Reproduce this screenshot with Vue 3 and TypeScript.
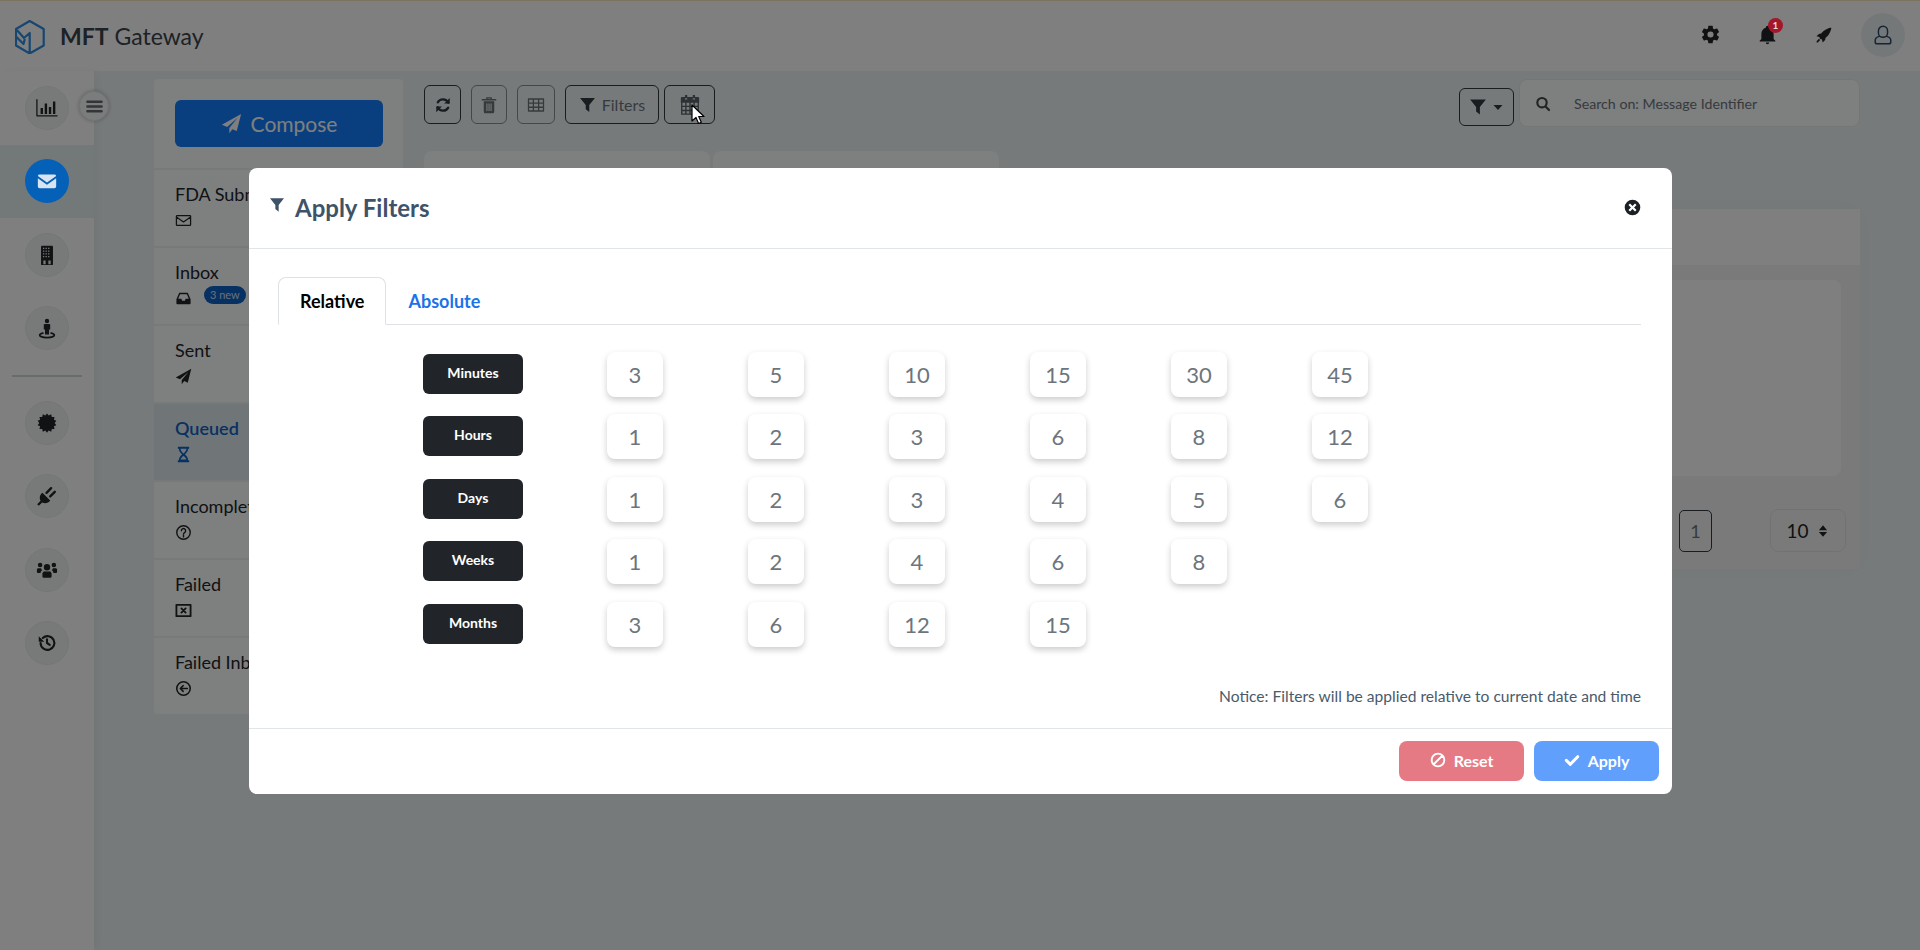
<script setup lang="ts">
import { h } from 'vue'
import type { FunctionalComponent } from 'vue'

interface IconDef {
  f?: string
  s?: string
  w?: number
}

// burst outline for the certificate icon
function burst(points: number, outer: number, inner: number): string {
  let d = ''
  for (let i = 0; i < points * 2; i++) {
    const r = i % 2 ? inner : outer
    const a = (Math.PI * i) / points
    d += `${i ? 'L' : 'M'}${(12 + r * Math.sin(a)).toFixed(2)} ${(12 - r * Math.cos(a)).toFixed(2)}`
  }
  return d + 'z'
}

// window holes of the building icon
function windows(): string {
  let d = ''
  for (let y = 4; y < 16; y += 3) {
    for (let x = 7.6; x < 16; x += 2.8) d += `M${x} ${y}h1.4v1.4H${x}z`
  }
  return d + 'M8 18h2.500v4H8zM13.500 18H16v4h-2.500z'
}

const icons: Record<string, IconDef> = {
  chart: { s: 'M1 3V20.500h22', f: 'M5 12h2.600v6.500H5zM9.500 7h2.600v11.500H9.500zM14 11h2.600v7.500H14zM18.500 5h2.600v13.500h-2.600z', w: 1.4 },
  mail: { f: 'M2 6.500A2 2 0 0 1 4 5h16a2 2 0 0 1 2 1.500l-10 7zM2 9v9a2 2 0 0 0 2 2h16a2 2 0 0 0 2-2V9l-10 7z' },
  envelope: { s: 'M3 5h18a1 1 0 0 1 1 1v12a1 1 0 0 1-1 1H3a1 1 0 0 1-1-1V6a1 1 0 0 1 1-1zM2.500 7.500L12 14l9.500-6.500', w: 1.8 },
  building: { f: 'M6.500 2h11a1 1 0 0 1 1 1v19a1 1 0 0 1-1 1h-11a1 1 0 0 1-1-1V3a1 1 0 0 1 1-1z' + windows() },
  street: {
    f: 'M12 2a2.400 2.400 0 1 0 0 4.800A2.400 2.400 0 0 0 12 2zM9.500 7.500h5a1 1 0 0 1 1 1v5h-1.300V19H9.800v-5.500H8.500v-5a1 1 0 0 1 1-1z',
    s: 'M7.500 17.500c-2 .5-3.500 1.300-3.500 2.200C4 21.200 7.500 22.500 12 22.500s8-1.300 8-2.800c0-.9-1.500-1.700-3.500-2.200',
    w: 1.900,
  },
  certificate: { f: burst(14, 10.500, 8.400) },
  plug: {
    f: 'M7 8.500l8.500 8.500c-2 3-6 3.600-8.800 2L3 22.700 1.300 21 5 17.300c-1.600-2.800-1-6.800 2-8.800z',
    s: 'M11.500 8.500l5-5M15.500 12.500l5-5',
    w: 2.600,
  },
  users: {
    f: 'M12 5.500a3.500 3.500 0 1 1 0 7 3.500 3.500 0 0 1 0-7zM4.500 4a2.500 2.500 0 1 1 0 5 2.500 2.500 0 0 1 0-5zM19.500 4a2.500 2.500 0 1 1 0 5 2.500 2.500 0 0 1 0-5zM7 15.500a3 3 0 0 1 3-2h4a3 3 0 0 1 3 2V19c0 1-.8 1.500-2 1.500H9c-1.200 0-2-.5-2-1.500zM1 11.500c0-1 1-1.500 2-1.500h2.500c.3 1 .8 1.700 1.500 2.300-1.500.7-2 1.700-2 3H2.500c-1 0-1.500-.8-1.500-1.800zM23 11.500c0-1-1-1.500-2-1.500h-2.500c-.3 1-.8 1.700-1.500 2.300 1.500.7 2 1.700 2 3h2.500c1 0 1.500-.8 1.500-1.800z',
  },
  history: { f: 'M3 4.500V10.500H9z', s: 'M5 12a7.500 7.500 0 1 0 2.400-5.500M12 8v4l3 2', w: 2.300 },
  send: { f: 'M23 1L1 13.500l6 2.500L19 5.500 9.500 17v6l3.500-4.500 5 2.200z' },
  inbox: { f: 'M6 4h12l4 9v6a1 1 0 0 1-1 1H3a1 1 0 0 1-1-1v-6zM7.200 6l-2.700 6.500H9l1 2.500h4l1-2.500h4.500L16.800 6z' },
  hourglass: {
    f: 'M4 1h16v3h-1.500c0 4-2.500 6-4.500 8 2 2 4.500 4 4.500 8H20v3H4v-3h1.500c0-4 2.500-6 4.500-8-2-2-4.500-4-4.500-8H4zM7.800 4c.2 3 2.700 5.500 4.200 6.500 1.500-1 4-3.500 4.200-6.500zM12 14c-1.500 1-3.400 2.600-4 5h8c-.6-2.400-2.500-4-4-5z',
  },
  question: { s: 'M12 2.500a9.500 9.500 0 1 0 0 19 9.500 9.500 0 0 0 0-19zM9 9.500a3 3 0 1 1 4.500 2.600c-1 .6-1.500 1.100-1.500 2.400M12 16v2.200', w: 2 },
  windowClose: { s: 'M2 4h20v16H2zM9 9l6 6M15 9l-6 6', w: 2.600 },
  arrowLeft: { s: 'M12 2.500a9.500 9.500 0 1 0 0 19 9.500 9.500 0 0 0 0-19zM17.500 12H8M11.500 8L7.500 12l4 4', w: 2.200 },
  refresh: {
    f: 'M21 2.500V10h-7.500zM3 21.500V14h7.500z',
    s: 'M19 9A7.800 7.800 0 0 0 5 8.500M5 15a7.800 7.800 0 0 0 14 .5',
    w: 3,
  },
  trash: {
    f: 'M5 7h14v14a2 2 0 0 1-2 2H7a2 2 0 0 1-2-2zM8.500 10v10H10V10zM11.300 10v10h1.500V10zM14 10v10h1.500V10z',
    s: 'M3 5h18M9 5V2.500h6V5',
    w: 1.800,
  },
  table: { s: 'M2 4h20v16H2zM2 9.500h20M2 15h20M8.500 4v16M15.500 4v16', w: 1.700 },
  filter: { f: 'M1.500 2h21l-8 10v10l-5-4V12z' },
  calendar: {
    f: 'M2 4h20v5.500H2zM6.500 1H9v5H6.500zM15 1h2.500v5H15z',
    s: 'M3 4h18v18H3zM3 13.500h18M3 18h18M7.500 9v13M12 9v13M16.500 9v13',
    w: 1.500,
  },
  gear: {
    f: 'M12 15.500A3.500 3.500 0 1 1 12 8.500a3.500 3.500 0 0 1 0 7zM19.430 12.970c.04-.32.07-.64.07-.97s-.03-.66-.07-1l2.110-1.630c.19-.15.24-.42.12-.64l-2-3.460c-.12-.22-.39-.31-.61-.22l-2.490 1c-.52-.39-1.060-.73-1.690-.98l-.37-2.650A.5.5 0 0 0 14 2h-4a.5.5 0 0 0-.5.42l-.37 2.650c-.63.25-1.170.59-1.690.98l-2.490-1c-.22-.09-.49 0-.61.22l-2 3.460c-.13.22-.07.49.12.64L4.570 11c-.04.34-.07.67-.07 1s.03.65.07.97l-2.110 1.660c-.19.15-.25.42-.12.64l2 3.460c.12.22.39.3.61.21l2.490-1c.52.4 1.060.74 1.690.99l.37 2.650c.04.24.25.42.5.42h4c.25 0 .46-.18.5-.42l.37-2.650c.63-.26 1.170-.59 1.690-.99l2.490 1c.22.09.49.01.61-.21l2-3.460c.12-.22.07-.49-.12-.64z',
  },
  bell: { f: 'M21 19v1H3v-1l2-2v-6c0-3.100 2.030-5.830 5-6.710V4a2 2 0 1 1 4 0v.29c2.970.88 5 3.610 5 6.710v6zM14 21a2 2 0 1 1-4 0z' },
  rocket: {
    f: 'M2.810 14.120l2.830-2.830 2.530-.5C11.390 6.410 17.550 4.220 19.780 4.220c0 2.230-2.190 8.390-6.570 11.610l-.5 2.530-2.830 2.830-.71-3.530c-1.410 0-1.410 0-2.120-.71s-.71-.71-.71-2.120zM5.640 16.950l1.410 1.410-2.660 2.670H2.970v-1.420z',
  },
  user: {
    s: 'M12 2.500a5 5 0 0 0-5 5v2a5 5 0 0 0 10 0v-2a5 5 0 0 0-5-5zM8 13.500c-2.500.5-4.500 2-4.500 4.500v1.500a2 2 0 0 0 2 2h13a2 2 0 0 0 2-2V18c0-2.500-2-4-4.500-4.500',
    w: 1.600,
  },
  search: { s: 'M10.500 3a7 7 0 1 0 0 14 7 7 0 0 0 0-14zM15.500 15.500L21 21', w: 3.200 },
  bars: { s: 'M3 6h18M3 12h18M3 18h18', w: 3 },
  ban: { s: 'M12 2.500a9.500 9.500 0 1 0 0 19 9.500 9.500 0 0 0 0-19zM6 18L18 6', w: 2.800 },
  check: { s: 'M3.500 12.500l6 6L20.500 7', w: 4.500 },
  closeCircle: {
    f: 'M12 1a11 11 0 1 0 0 22 11 11 0 0 0 0-22zM8.500 6.300L12 9.800l3.500-3.500 2.200 2.200-3.500 3.500 3.500 3.500-2.200 2.200-3.500-3.500-3.500 3.500-2.200-2.200 3.500-3.500-3.500-3.500z',
  },
  caret: { f: 'M3 8h18l-9 10z' },
  sort: { f: 'M12 2l7 8.500H5zM12 22l-7-8.500h14z' },
}

const Ico: FunctionalComponent<{ n: string }> = (props) => {
  const def = icons[props.n]
  return h('svg', { viewBox: '0 0 24 24', class: 'ico' }, [
    def.f ? h('path', { d: def.f, fill: 'currentColor', 'fill-rule': 'evenodd' }) : null,
    def.s
      ? h('path', {
          d: def.s,
          fill: 'none',
          stroke: 'currentColor',
          'stroke-width': def.w ?? 2,
          'stroke-linecap': 'round',
          'stroke-linejoin': 'round',
        })
      : null,
  ])
}
Ico.props = ['n']

const railTop = ['chart', 'mail', 'building', 'street']
const railBottom = ['certificate', 'plug', 'users', 'history']

const folders = [
  { name: 'FDA Submissions', icon: 'envelope' },
  { name: 'Inbox', icon: 'inbox', badge: '3 new' },
  { name: 'Sent', icon: 'send' },
  { name: 'Queued', icon: 'hourglass', active: true },
  { name: 'Incomplete', icon: 'question' },
  { name: 'Failed', icon: 'windowClose' },
  { name: 'Failed Inbound', icon: 'arrowLeft' },
]

const ranges = [
  { label: 'Minutes', values: [3, 5, 10, 15, 30, 45] },
  { label: 'Hours', values: [1, 2, 3, 6, 8, 12] },
  { label: 'Days', values: [1, 2, 3, 4, 5, 6] },
  { label: 'Weeks', values: [1, 2, 4, 6, 8] },
  { label: 'Months', values: [3, 6, 12, 15] },
]
</script>

<template>
  <div class="page">
    <header class="topbar">
      <svg class="logo" viewBox="0 0 30 34">
        <path d="M14.700 1L28.700 9v16.500L14.700 33.500 1 25.500V9zM1 9l8 9 5.700-5v20.500M1.500 17l7 7 1.300-5" fill="none" stroke="#2f8ee0" stroke-width="2.200" stroke-linejoin="round" />
      </svg>
      <span class="brand"><b>MFT</b> Gateway</span>
      <div class="top-actions">
        <span class="top-icon"><Ico n="gear" /></span>
        <span class="top-icon bell"><Ico n="bell" /><i class="bell-badge">1</i></span>
        <span class="top-icon"><Ico n="rocket" /></span>
        <span class="avatar"><Ico n="user" /></span>
      </div>
    </header>

    <div class="layout">
      <nav class="rail">
        <button class="rail-toggle"><Ico n="bars" /></button>
        <div v-for="name in railTop" :key="name" class="rail-row" :class="{ current: name === 'mail' }">
          <span class="rail-btn"><Ico :n="name" /></span>
        </div>
        <hr class="rail-line" />
        <div v-for="name in railBottom" :key="name" class="rail-row">
          <span class="rail-btn"><Ico :n="name" /></span>
        </div>
      </nav>

      <main class="main">
        <aside class="folders">
          <div class="compose-wrap">
            <button class="compose"><Ico n="send" /> Compose</button>
          </div>
          <div v-for="folder in folders" :key="folder.name" class="folder" :class="{ active: folder.active }">
            <div class="folder-name">{{ folder.name }}</div>
            <div class="folder-meta">
              <Ico :n="folder.icon" />
              <span v-if="folder.badge" class="new-badge">{{ folder.badge }}</span>
            </div>
          </div>
        </aside>

        <section class="content">
          <div class="toolbar">
            <button class="tool dark w37"><Ico n="refresh" /></button>
            <button class="tool faint w36"><Ico n="trash" /></button>
            <button class="tool faint w38"><Ico n="table" /></button>
            <button class="tool wide"><Ico n="filter" /><span>Filters</span></button>
            <button class="tool w51"><Ico n="calendar" /></button>
            <div class="search-group">
              <button class="tool filter-drop"><Ico n="filter" /><Ico n="caret" /></button>
              <div class="search">
                <Ico n="search" />
                <span>Search on: Message Identifier</span>
              </div>
            </div>
          </div>

          <div class="sub-tabs">
            <div class="sub-tab"></div>
            <div class="sub-tab"></div>
          </div>

          <div class="panel">
            <div class="panel-head"></div>
            <div class="panel-body">
              <div class="panel-card"></div>
              <div class="pager">
                <span class="page-no">1</span>
                <span class="per-page">10 <Ico n="sort" /></span>
              </div>
            </div>
          </div>
        </section>
      </main>
    </div>

    <div class="backdrop">
      <div class="modal">
        <div class="modal-head">
          <Ico n="filter" class="head-funnel" />
          <h2>Apply Filters</h2>
          <Ico n="closeCircle" class="head-close" />
        </div>

        <div class="modal-body">
          <div class="tabs">
            <span class="tab selected">Relative</span>
            <span class="tab">Absolute</span>
          </div>

          <div class="ranges">
            <div v-for="range in ranges" :key="range.label" class="range-row">
              <span class="range-label">{{ range.label }}</span>
              <div class="range-values">
                <button v-for="v in range.values" :key="v" class="range-value">{{ v }}</button>
              </div>
            </div>
          </div>

          <p class="notice">Notice: Filters will be applied relative to current date and time</p>
        </div>

        <div class="modal-foot">
          <button class="foot-btn reset"><Ico n="ban" /> Reset</button>
          <button class="foot-btn apply"><Ico n="check" /> Apply</button>
        </div>
      </div>
    </div>

    <svg class="cursor" viewBox="0 0 14 21">
      <path d="M1 1v16l4-3.500 2.600 6 2.700-1.200-2.600-5.800h5.300z" fill="#fff" stroke="#000" stroke-width="1.200" stroke-linejoin="round" />
    </svg>
  </div>
</template>

<style scoped>
.page {
  position: relative;
  height: 950px;
  overflow: hidden;
  background: #edf5f6;
  font-family: 'Lato', 'Noto Sans', sans-serif;
  color: #212529;
}

.ico {
  display: block;
  width: 18px;
  height: 18px;
  flex: none;
}

button {
  font-family: inherit;
  cursor: pointer;
}

/* top bar */
.topbar {
  height: 71px;
  box-sizing: border-box;
  display: flex;
  align-items: center;
  padding: 0 15px 3px 15px;
  background: #fff;
  border-top: 1px solid #f5e6c0;
}

.logo {
  width: 30px;
  height: 34px;
  margin: 5px 15px 0 0;
}

.brand {
  font-size: 23px;
  color: #3b444c;
  margin-top: 2px;
}

.brand b {
  font-weight: 700;
}

.top-actions {
  margin-left: auto;
  display: flex;
  align-items: center;
}

.top-icon {
  position: relative;
  width: 57px;
  display: flex;
  justify-content: center;
  color: #212529;
}

.top-icon .ico {
  width: 21px;
  height: 21px;
}

.bell-badge {
  position: absolute;
  top: -6px;
  left: 29px;
  width: 15px;
  height: 15px;
  border-radius: 50%;
  z-index: 60;
  background: #a5162b;
  color: #ddd;
  font: 700 10px/15px 'Lato', sans-serif;
  text-align: center;
}

.avatar {
  width: 44px;
  height: 44px;
  margin-left: 8px;
  border-radius: 50%;
  background: #eaf0f3;
  display: flex;
  align-items: center;
  justify-content: center;
  color: #2a4a6a;
}

.avatar .ico {
  width: 22px;
  height: 22px;
}

/* icon rail */
.layout {
  display: flex;
  height: 879px;
}

.rail {
  position: relative;
  flex: none;
  width: 94px;
  background: #fff;
  box-shadow: 4px 0 8px rgba(0, 0, 0, 0.04);
}

.rail-toggle {
  position: absolute;
  top: 20px;
  left: 79px;
  z-index: 2;
  width: 30px;
  height: 30px;
  padding: 0;
  border: 1px solid #e4e9e9;
  border-radius: 50%;
  background: #f6f9f9;
  box-shadow: 0 0 4px rgba(0, 0, 0, 0.25);
  display: flex;
  align-items: center;
  justify-content: center;
  color: #666c70;
}

.rail-toggle .ico {
  width: 19px;
  height: 19px;
}

.rail-row {
  height: 73.5px;
  display: flex;
  align-items: center;
  justify-content: center;
}

.rail-row.current {
  background: #e6f0f3;
}

.rail-btn {
  width: 44px;
  height: 44px;
  border-radius: 50%;
  background: #f0f5f5;
  border: 1px solid #e9eeee;
  box-sizing: border-box;
  display: flex;
  align-items: center;
  justify-content: center;
}

.rail-btn .ico {
  width: 22px;
  height: 22px;
}

.current .rail-btn {
  position: relative;
  z-index: 60;
  background: #0560b8;
  border: 0;
  color: #d8e4f0;
}

.rail-line {
  width: 70px;
  margin: 10px auto 9px;
  border: 0;
  border-top: 2px solid #d3d8d8;
}

/* folder column */
.main {
  flex: 1;
  display: flex;
  align-items: flex-start;
  gap: 21px;
  padding: 8px 60px 0;
  min-width: 0;
}

.folders {
  flex: none;
  width: 249px;
  background: #fdfefe;
  border-radius: 4px;
}

.compose-wrap {
  padding: 21px 20px 21px 21px;
  height: 89px;
  box-sizing: border-box;
}

.compose {
  width: 100%;
  height: 47px;
  border: 0;
  border-radius: 6px;
  background: #127eff;
  color: #fff;
  font-size: 21px;
  display: flex;
  align-items: center;
  justify-content: center;
  gap: 9px;
}

.compose .ico {
  width: 21px;
  height: 21px;
}

.folder {
  height: 78px;
  box-sizing: border-box;
  padding: 12px 21px 0;
  border-top: 2px solid #f1f3f3;
}

.folder.active {
  background: #e0ecf0;
  color: #0d62c4;
}

.folder.active .folder-name {
  font-weight: 600;
}

.folder-name {
  font-size: 18px;
  line-height: 24px;
  white-space: nowrap;
  overflow: hidden;
}

.folder-meta {
  display: flex;
  align-items: center;
  gap: 12px;
  margin-top: 6px;
}

.folder-meta .ico {
  width: 17px;
  height: 17px;
}

.new-badge {
  background: #0d62c4;
  color: #cfe0f5;
  font-size: 11px;
  line-height: 18px;
  padding: 0 6px;
  border-radius: 9px;
  margin-top: -8px;
}

/* content column */
.content {
  flex: 1;
  min-width: 0;
}

.toolbar {
  display: flex;
  align-items: flex-start;
  gap: 10px;
  height: 72px;
}

.tool {
  height: 39px;
  margin-top: 6px;
  padding: 0;
  background: transparent;
  border: 1px solid #333a40;
  border-radius: 6px;
  display: flex;
  align-items: center;
  justify-content: center;
  gap: 6px;
  color: #333a40;
}

.tool.faint {
  border-color: #8a9090;
  color: #6e7478;
}

.w37 {
  width: 37px;
}

.w36 {
  width: 36px;
}

.w38 {
  width: 38px;
}

.w51 {
  width: 51px;
  margin-left: -5px;
  color: #5c6268;
}

.w51 .ico {
  width: 22px;
  height: 22px;
}

.tool.wide {
  width: 94px;
  color: #6c757d;
  font-size: 16px;
}

.tool.wide .ico:first-child {
  color: #333a40;
  width: 17px;
}

.search-group {
  margin-left: auto;
  display: flex;
  gap: 5px;
}

.filter-drop {
  width: 55px;
  margin-top: 9px;
  height: 38px;
  gap: 5px;
}

.filter-drop .ico:last-child {
  width: 12px;
  height: 12px;
}

.search {
  width: 341px;
  height: 48px;
  box-sizing: border-box;
  padding: 1px 15px 0;
  display: flex;
  align-items: center;
  gap: 23px;
  background: #fdfefe;
  border: 1px solid #e8eded;
  border-radius: 8px;
  color: #6c757d;
  font-size: 14.2px;
}

.search .ico {
  width: 16px;
  height: 16px;
  color: #444;
}

.sub-tabs {
  display: flex;
  gap: 3px;
  height: 58px;
}

.sub-tab {
  width: 286px;
  background: #fdfefe;
  border-radius: 8px 8px 0 0;
}

.panel {
  background: #fff;
  box-shadow: 0 0 24px rgba(0, 0, 0, 0.03);
}

.panel-head {
  height: 56px;
}

.panel-body {
  background: #f5f5f5;
  padding: 15px 19px 17px 20px;
}

.panel-card {
  height: 196px;
  background: #fff;
  border-radius: 8px;
}

.pager {
  display: flex;
  align-items: center;
  justify-content: flex-end;
  margin: 33px -5px 0 0;
}

.page-no {
  width: 33px;
  height: 42px;
  box-sizing: border-box;
  border: 1px solid #333a40;
  border-radius: 5px;
  text-align: center;
  line-height: 40px;
  color: #6c757d;
  font-size: 18px;
  margin-right: 58px;
}

.per-page {
  width: 76px;
  height: 43px;
  box-sizing: border-box;
  border: 1px solid #e4e4e4;
  border-radius: 8px;
  display: flex;
  align-items: center;
  justify-content: center;
  gap: 7px;
  font-size: 19px;
}

.per-page .ico {
  width: 14px;
  height: 14px;
}

/* modal */
.backdrop {
  position: absolute;
  inset: 0;
  z-index: 50;
  background: rgba(0, 0, 0, 0.5);
}

.modal {
  position: absolute;
  z-index: 70;
  top: 168px;
  left: 249px;
  width: 1423px;
  background: #fff;
  border-radius: 8px;
  overflow: hidden;
}

.modal-head {
  position: relative;
  height: 81px;
  box-sizing: border-box;
  padding: 0 20px 2px;
  display: flex;
  align-items: center;
  border-bottom: 1px solid #e2e5e8;
}

.head-funnel {
  width: 16px;
  height: 16px;
  color: #3f5368;
  margin-bottom: 4px;
}

.modal-head h2 {
  margin: 0 0 0 10px;
  font-size: 24px;
  font-weight: 700;
  color: #3f5368;
}

.head-close {
  margin-left: auto;
  width: 17px;
  height: 17px;
  color: #1c2024;
  margin-right: 11px;
  margin-top: 1px;
}

.modal-body {
  padding: 28px 31px 0 29px;
}

.tabs {
  display: flex;
  height: 48px;
  box-sizing: border-box;
  border-bottom: 1px solid #dee2e6;
}

.tab {
  padding: 0 21px;
  line-height: 47px;
  font-size: 18px;
  font-weight: 700;
  color: #1a73e8;
  height: 48px;
  box-sizing: border-box;
  border: 1px solid transparent;
}

.tab.selected {
  color: #000;
  background: #fff;
  border-color: #dee2e6 #dee2e6 #fff;
  border-radius: 8px 8px 0 0;
}

.ranges {
  margin: 26px 0 0 145px;
  display: flex;
  flex-direction: column;
  gap: 17.5px;
}

.range-row {
  display: flex;
  align-items: center;
  height: 45px;
}

.range-label {
  width: 100px;
  height: 40px;
  line-height: 37px;
  text-align: center;
  background: #212529;
  color: #fff;
  font-size: 14px;
  font-weight: 700;
  border-radius: 6px;
  margin-right: 84px;
}

.range-values {
  display: flex;
  gap: 85px;
}

.range-value {
  width: 56px;
  height: 45px;
  margin-top: 1px;
  padding: 0;
  border: 0;
  border-radius: 8px;
  background: #fff;
  box-shadow: 0 3px 6px rgba(0, 0, 0, 0.2);
  color: #6c757d;
  font-size: 22px;
}

.notice {
  margin: 39px 0 0;
  height: 43px;
  text-align: right;
  font-size: 15.6px;
  line-height: 22px;
  color: #4a5a6a;
}

.modal-foot {
  height: 66px;
  box-sizing: border-box;
  padding: 12px 13px 0 0;
  display: flex;
  justify-content: flex-end;
  gap: 10px;
  border-top: 1px solid #e2e5e8;
}

.foot-btn {
  width: 125px;
  height: 40px;
  padding: 0 0 2px;
  border: 0;
  border-radius: 8px;
  color: #fff;
  font-size: 16px;
  font-weight: 700;
  display: flex;
  align-items: center;
  justify-content: center;
  gap: 8px;
}

.foot-btn .ico {
  width: 16px;
  height: 16px;
}

.reset {
  background: #e57a84;
}

.apply {
  background: #619ffc;
}

.cursor {
  position: absolute;
  z-index: 80;
  left: 691px;
  top: 104px;
  width: 14px;
  height: 21px;
}
</style>
